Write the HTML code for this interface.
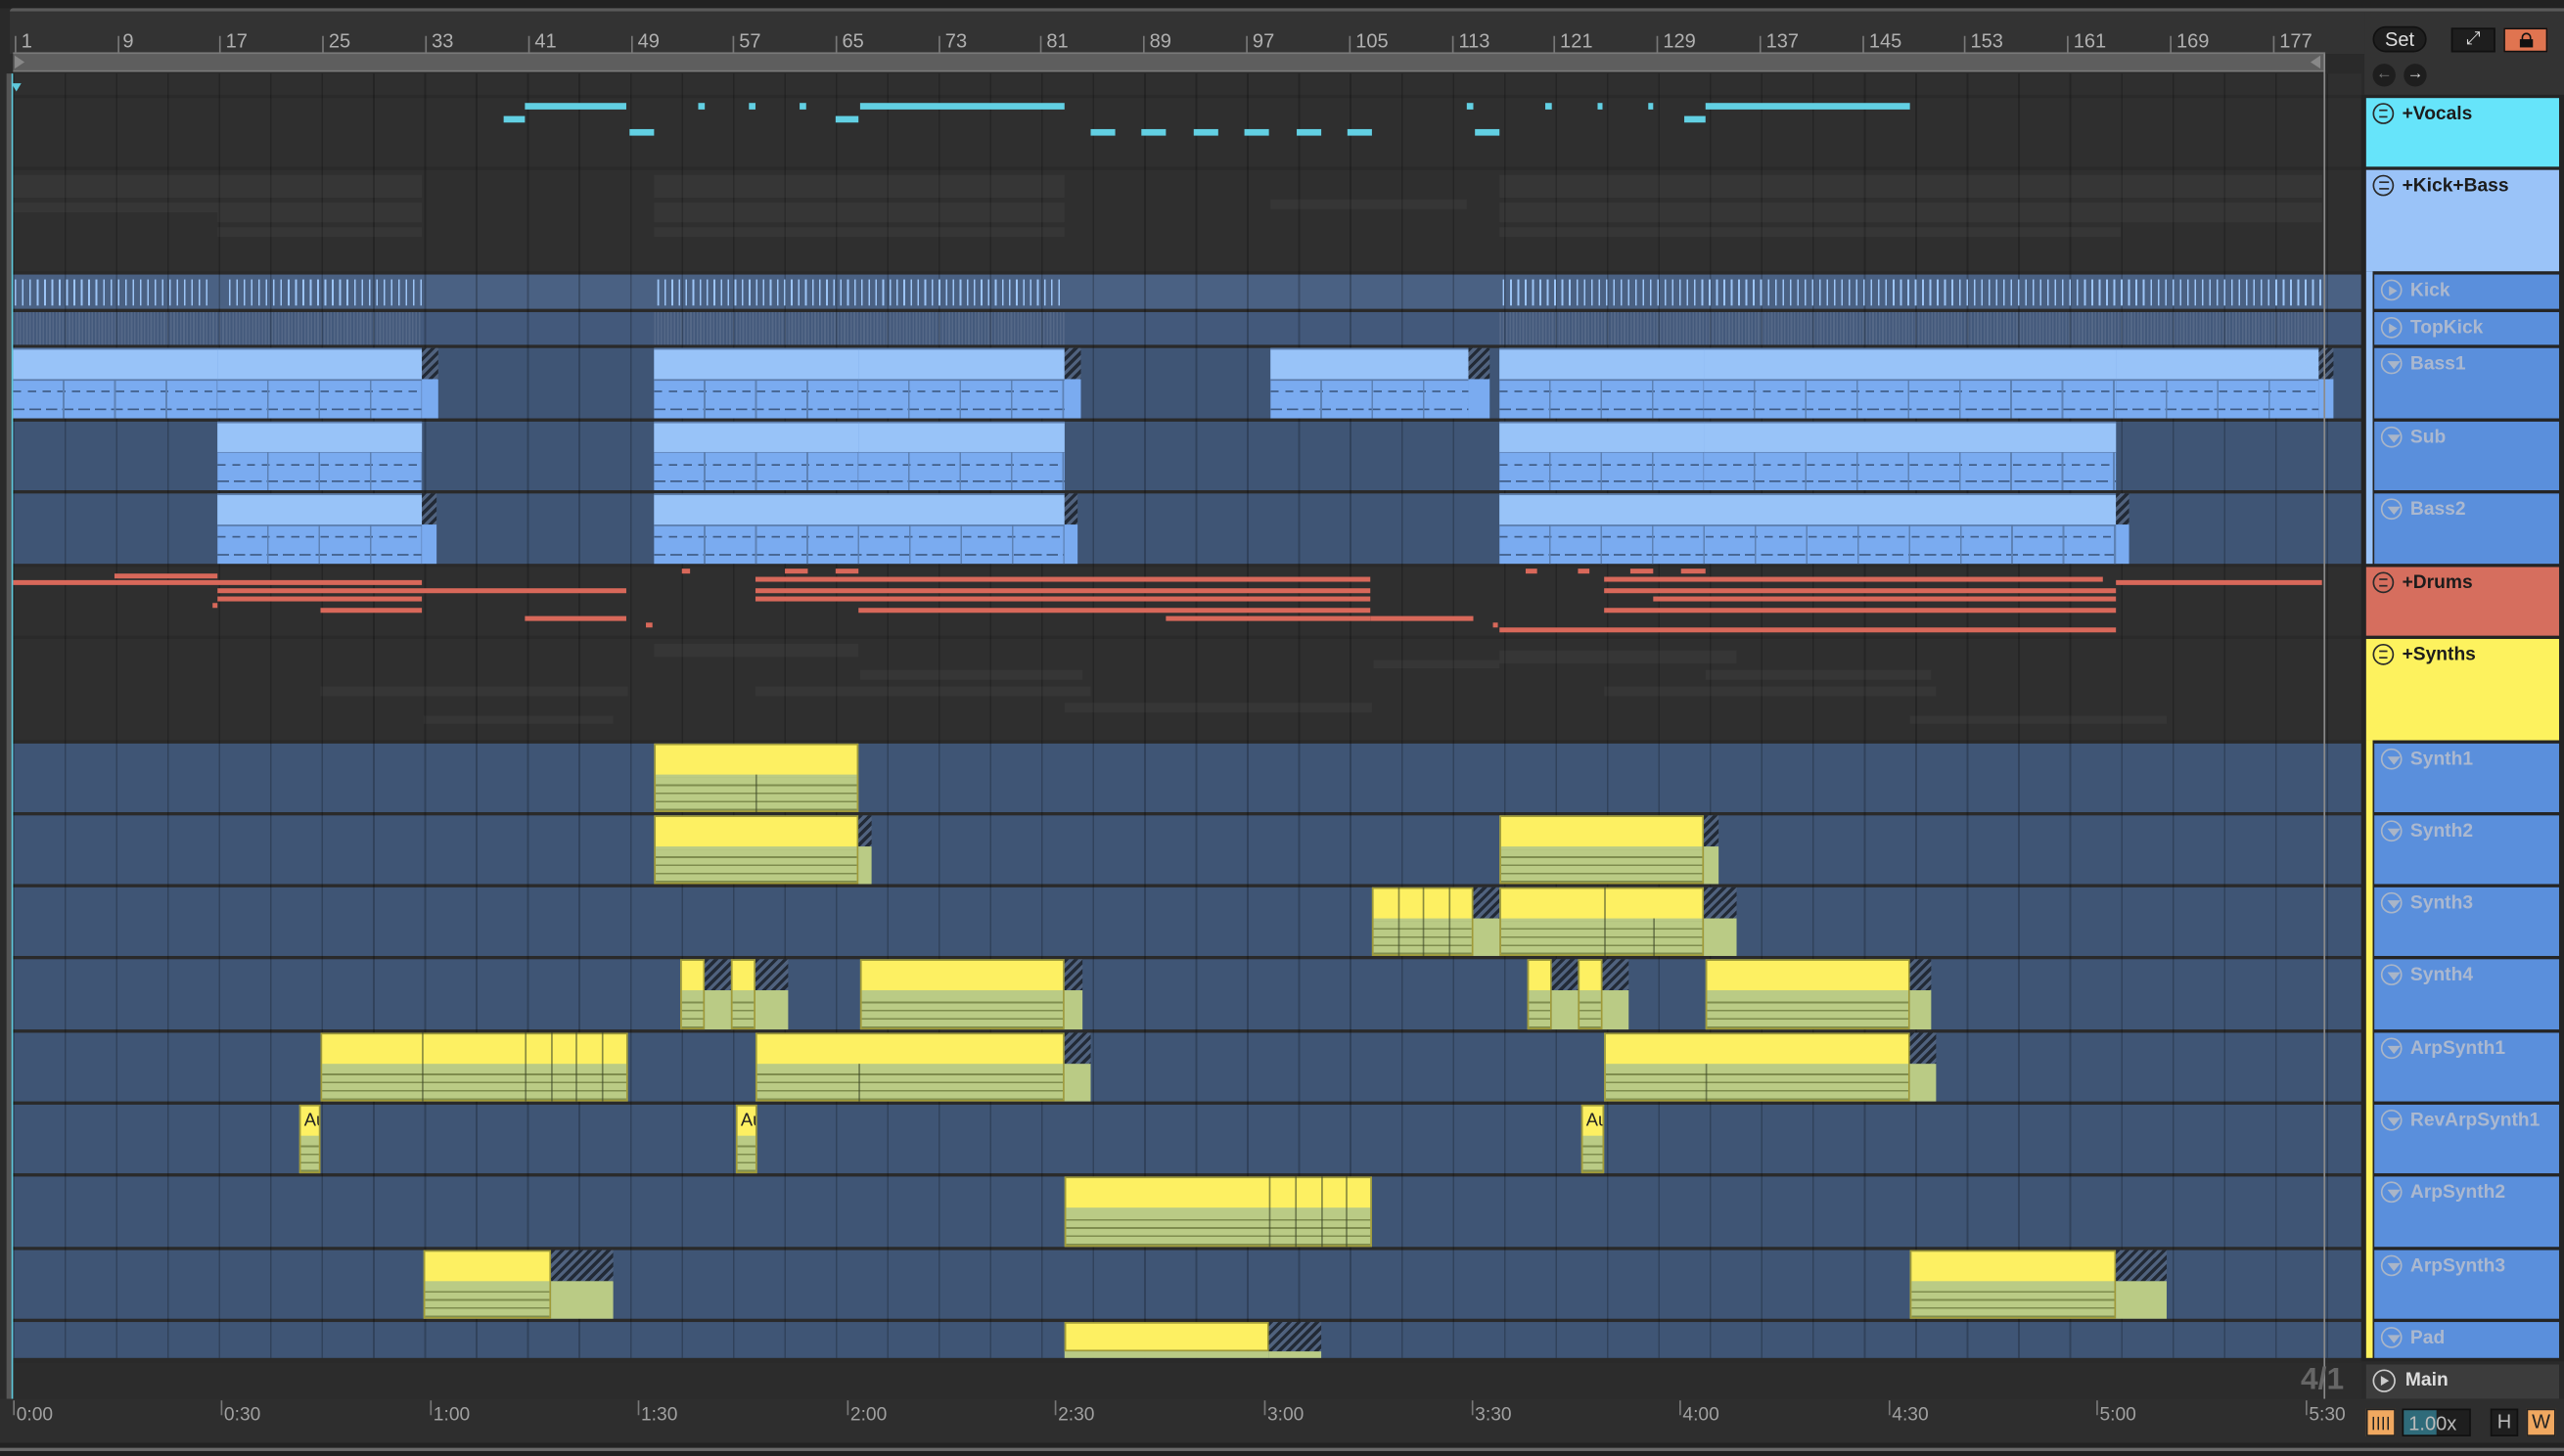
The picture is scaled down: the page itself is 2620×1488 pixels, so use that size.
<!DOCTYPE html>
<html><head><meta charset="utf-8"><style>
*{margin:0;padding:0;box-sizing:border-box}
html,body{width:2620px;height:1488px;overflow:hidden;background:#262626;font-family:"Liberation Sans",sans-serif}
#s{position:absolute;left:0;top:0;width:1568px;height:891px;transform:scale(1.67092,1.67003);transform-origin:0 0;background:#2a2a2a}
#s div{position:absolute}
.lg{background:#2f2f2f}
.lb{background:#3f5575}
.grid{background:repeating-linear-gradient(90deg,rgba(0,0,0,.22) 0 1px,transparent 1px 31.44px)}
.b{background:linear-gradient(#98c3f8,#98c3f8) 0 0/100% 43% no-repeat,linear-gradient(#5878a6,#5878a6) 0 43%/100% 1px no-repeat,repeating-linear-gradient(90deg,transparent 0 30.4px,#5d82b5 30.4px 31.4px),repeating-linear-gradient(90deg,#3f5c86 0 5px,transparent 5px 9px) 0 62%/100% 1px no-repeat,repeating-linear-gradient(90deg,#3f5c86 0 7px,transparent 7px 10px) 0 88%/100% 1px no-repeat,#7aabf0;border-top:1px solid #5e7fae}
.y{background:linear-gradient(#fdf062,#fdf062) 0 0/100% 45% no-repeat,repeating-linear-gradient(180deg,transparent 0 4px,#7f8d4e 4px 5px) 0 100%/100% 50% no-repeat,#bacb85;border:1px solid #a09a38}
.h{background:repeating-linear-gradient(135deg,#222a36 0 2px,#50627e 2px 4px)}
.v{width:1px;background:rgba(60,70,40,.6)}
.cy{background:#62d0e3;height:4px}
.r{background:#d8685a;height:3px}
.f{background:rgba(255,255,255,.035)}
.hd{font-weight:bold;font-size:11.5px;color:#1c1c1c;padding:4px 0 0 22px}
.st{background:#5a8fdc;font-weight:bold;font-size:11.5px;color:#abb8cf;padding:4px 0 0 22px;left:1452px;width:113px}
.ic{left:4px;top:3px;width:13px;height:13px;border-radius:50%;border:1.3px solid #2a2a2a}
.st .ic{border-color:#a9b5c8}
.tri{left:3px;top:4px;border-left:4px solid transparent;border-right:4px solid transparent;border-top:5px solid #a9b5c8}
.pl{left:4px;top:2.5px;border-top:3.5px solid transparent;border-bottom:3.5px solid transparent;border-left:5px solid #a9b5c8}
.rl{color:#b0b0b0;font-size:12px;top:18px}
.tk{width:1px;background:#777;top:22px;height:11px}
.tl{color:#a0a0a0;font-size:11.5px;top:860px}
.tt{width:1px;background:#777;top:857px;height:9px}
</style></head><body><div id="s">
<div style="left:0;top:0;width:1568px;height:5px;background:#222"></div>
<div style="left:6px;top:5px;width:1562px;height:2px;background:#5a5a5a;border-radius:3px 0 0 0"></div>
<div style="left:6px;top:7px;width:1440px;height:26px;background:#333"></div>
<div style="left:1446px;top:7px;width:122px;height:51px;background:#333"></div>
<div style="left:4px;top:45px;width:3px;height:812px;background:#555"></div>
<!-- ruler -->
<div class="tk" style="left:9px"></div><div class="rl" style="left:13px">1</div>
<div class="tk" style="left:72px"></div><div class="rl" style="left:75px">9</div>
<div class="tk" style="left:134px"></div><div class="rl" style="left:138px">17</div>
<div class="tk" style="left:197px"></div><div class="rl" style="left:201px">25</div>
<div class="tk" style="left:260px"></div><div class="rl" style="left:264px">33</div>
<div class="tk" style="left:323px"></div><div class="rl" style="left:327px">41</div>
<div class="tk" style="left:386px"></div><div class="rl" style="left:390px">49</div>
<div class="tk" style="left:448px"></div><div class="rl" style="left:452px">57</div>
<div class="tk" style="left:511px"></div><div class="rl" style="left:515px">65</div>
<div class="tk" style="left:574px"></div><div class="rl" style="left:578px">73</div>
<div class="tk" style="left:636px"></div><div class="rl" style="left:640px">81</div>
<div class="tk" style="left:699px"></div><div class="rl" style="left:703px">89</div>
<div class="tk" style="left:762px"></div><div class="rl" style="left:766px">97</div>
<div class="tk" style="left:825px"></div><div class="rl" style="left:829px">105</div>
<div class="tk" style="left:888px"></div><div class="rl" style="left:892px">113</div>
<div class="tk" style="left:950px"></div><div class="rl" style="left:954px">121</div>
<div class="tk" style="left:1013px"></div><div class="rl" style="left:1017px">129</div>
<div class="tk" style="left:1076px"></div><div class="rl" style="left:1080px">137</div>
<div class="tk" style="left:1139px"></div><div class="rl" style="left:1143px">145</div>
<div class="tk" style="left:1201px"></div><div class="rl" style="left:1205px">153</div>
<div class="tk" style="left:1264px"></div><div class="rl" style="left:1268px">161</div>
<div class="tk" style="left:1327px"></div><div class="rl" style="left:1331px">169</div>
<div class="tk" style="left:1390px"></div><div class="rl" style="left:1394px">177</div>
<!-- loop bar -->
<div style="left:8px;top:32px;width:1414px;height:12px;background:#5e5e5e;border-top:1.5px solid #7a7a7a;border-bottom:1.5px solid #7a7a7a"></div>
<div style="left:9px;top:34px;border-top:4px solid transparent;border-bottom:4px solid transparent;border-left:6px solid #888"></div>
<div style="left:1413px;top:34px;border-top:4px solid transparent;border-bottom:4px solid transparent;border-right:6px solid #888"></div>
<!-- lanes -->
<div class="lg" style="left:8px;top:45px;width:1436px;height:13px"></div>
<div class="lg" style="left:8px;top:60px;width:1436px;height:42px"></div>
<div class="lg" style="left:8px;top:104px;width:1436px;height:62px"></div>
<div style="left:8px;top:168px;width:1436px;height:21px;background:#4a6183"></div>
<div style="left:8px;top:191px;width:1436px;height:20px;background:#43597b"></div>
<div class="lb" style="left:8px;top:213px;width:1436px;height:43px"></div>
<div class="lb" style="left:8px;top:258px;width:1436px;height:42px"></div>
<div class="lb" style="left:8px;top:302px;width:1436px;height:43px"></div>
<div class="lg" style="left:8px;top:347px;width:1436px;height:42px"></div>
<div class="lg" style="left:8px;top:391px;width:1436px;height:62px"></div>
<div class="lb" style="left:8px;top:455px;width:1436px;height:42px"></div>
<div class="lb" style="left:8px;top:499px;width:1436px;height:42px"></div>
<div class="lb" style="left:8px;top:543px;width:1436px;height:42px"></div>
<div class="lb" style="left:8px;top:587px;width:1436px;height:43px"></div>
<div class="lb" style="left:8px;top:632px;width:1436px;height:42px"></div>
<div class="lb" style="left:8px;top:676px;width:1436px;height:42px"></div>
<div class="lb" style="left:8px;top:720px;width:1436px;height:43px"></div>
<div class="lb" style="left:8px;top:765px;width:1436px;height:42px"></div>
<div class="lb" style="left:8px;top:809px;width:1436px;height:22px"></div>
<div class="lg" style="left:8px;top:834px;width:1436px;height:22px;background:#2c2c2c"></div>
<div class="grid" style="left:8px;top:45px;width:1436px;height:786px"></div>
<!-- KB overview -->
<div class="f" style="left:8px;top:107px;width:250px;height:14px"></div>
<div class="f" style="left:400px;top:107px;width:251px;height:14px"></div>
<div class="f" style="left:917px;top:107px;width:503px;height:14px"></div>
<div class="f" style="left:8px;top:124px;width:125px;height:6px"></div>
<div class="f" style="left:133px;top:124px;width:125px;height:12px"></div>
<div class="f" style="left:400px;top:124px;width:251px;height:12px"></div>
<div class="f" style="left:917px;top:124px;width:503px;height:12px"></div>
<div class="f" style="left:133px;top:139px;width:125px;height:6px"></div>
<div class="f" style="left:400px;top:139px;width:251px;height:6px"></div>
<div class="f" style="left:777px;top:122px;width:120px;height:6px"></div>
<div class="f" style="left:917px;top:139px;width:380px;height:6px"></div>
<!-- synths overview -->
<div class="f" style="left:400px;top:394px;width:125px;height:8px"></div>
<div class="f" style="left:917px;top:398px;width:145px;height:8px"></div>
<div class="f" style="left:840px;top:404px;width:77px;height:5px"></div>
<div class="f" style="left:526px;top:410px;width:136px;height:6px"></div>
<div class="f" style="left:1043px;top:410px;width:138px;height:6px"></div>
<div class="f" style="left:196px;top:420px;width:188px;height:6px"></div>
<div class="f" style="left:462px;top:420px;width:205px;height:6px"></div>
<div class="f" style="left:981px;top:420px;width:203px;height:6px"></div>
<div class="f" style="left:651px;top:430px;width:188px;height:6px"></div>
<div class="f" style="left:259px;top:438px;width:116px;height:5px"></div>
<div class="f" style="left:1168px;top:438px;width:157px;height:5px"></div>
<!-- vocals -->
<div class="cy" style="left:321px;top:63px;width:62px"></div>
<div class="cy" style="left:427px;top:63px;width:4px"></div>
<div class="cy" style="left:458px;top:63px;width:4px"></div>
<div class="cy" style="left:489px;top:63px;width:4px"></div>
<div class="cy" style="left:526px;top:63px;width:125px"></div>
<div class="cy" style="left:897px;top:63px;width:4px"></div>
<div class="cy" style="left:945px;top:63px;width:4px"></div>
<div class="cy" style="left:977px;top:63px;width:3px"></div>
<div class="cy" style="left:1008px;top:63px;width:3px"></div>
<div class="cy" style="left:1043px;top:63px;width:125px"></div>
<div class="cy" style="left:308px;top:71px;width:13px"></div>
<div class="cy" style="left:511px;top:71px;width:14px"></div>
<div class="cy" style="left:1030px;top:71px;width:13px"></div>
<div class="cy" style="left:385px;top:79px;width:15px"></div>
<div class="cy" style="left:667px;top:79px;width:15px"></div>
<div class="cy" style="left:698px;top:79px;width:15px"></div>
<div class="cy" style="left:730px;top:79px;width:15px"></div>
<div class="cy" style="left:761px;top:79px;width:15px"></div>
<div class="cy" style="left:793px;top:79px;width:15px"></div>
<div class="cy" style="left:824px;top:79px;width:15px"></div>
<div class="cy" style="left:902px;top:79px;width:15px"></div>
<!-- kick -->
<div style="left:9px;top:171px;width:119px;height:16px;background:repeating-linear-gradient(90deg,#9cc4f5 0 1px,transparent 1px 4.5px)"></div>
<div style="left:140px;top:171px;width:118px;height:16px;background:repeating-linear-gradient(90deg,#9cc4f5 0 1px,transparent 1px 4.5px)"></div>
<div style="left:402px;top:171px;width:249px;height:16px;background:repeating-linear-gradient(90deg,#9cc4f5 0 1px,transparent 1px 4.3px)"></div>
<div style="left:919px;top:171px;width:501px;height:16px;background:repeating-linear-gradient(90deg,#9cc4f5 0 1px,transparent 1px 4.5px)"></div>
<div style="left:8px;top:191px;width:250px;height:20px;background:repeating-linear-gradient(90deg,rgba(255,255,255,.09) 0 1px,transparent 1px 2px)"></div>
<div style="left:400px;top:191px;width:251px;height:20px;background:repeating-linear-gradient(90deg,rgba(255,255,255,.09) 0 1px,transparent 1px 2px)"></div>
<div style="left:917px;top:191px;width:503px;height:20px;background:repeating-linear-gradient(90deg,rgba(255,255,255,.09) 0 1px,transparent 1px 2px)"></div>
<!-- bass1 -->
<div class="b" style="left:8px;top:213px;width:125px;height:43px"></div>
<div class="b" style="left:133px;top:213px;width:125px;height:43px"></div><div class="h" style="left:258px;top:213px;width:10px;height:19px"></div><div style="left:258px;top:232px;width:10px;height:24px;background:#7aabf0"></div>
<div class="b" style="left:400px;top:213px;width:125px;height:43px"></div>
<div class="b" style="left:525px;top:213px;width:126px;height:43px"></div><div class="h" style="left:651px;top:213px;width:10px;height:19px"></div><div style="left:651px;top:232px;width:10px;height:24px;background:#7aabf0"></div>
<div class="b" style="left:777px;top:213px;width:121px;height:43px"></div><div class="h" style="left:898px;top:213px;width:13px;height:19px"></div><div style="left:898px;top:232px;width:13px;height:24px;background:#7aabf0"></div>
<div class="b" style="left:917px;top:213px;width:125px;height:43px"></div>
<div class="b" style="left:1042px;top:213px;width:252px;height:43px"></div>
<div class="b" style="left:1294px;top:213px;width:124px;height:43px"></div><div class="h" style="left:1418px;top:213px;width:9px;height:19px"></div><div style="left:1418px;top:232px;width:9px;height:24px;background:#7aabf0"></div>
<!-- sub -->
<div class="b" style="left:133px;top:258px;width:125px;height:42px"></div>
<div class="b" style="left:400px;top:258px;width:125px;height:42px"></div>
<div class="b" style="left:525px;top:258px;width:126px;height:42px"></div>
<div class="b" style="left:917px;top:258px;width:125px;height:42px"></div>
<div class="b" style="left:1042px;top:258px;width:252px;height:42px"></div>
<!-- bass2 -->
<div class="b" style="left:133px;top:302px;width:125px;height:43px"></div><div class="h" style="left:258px;top:302px;width:9px;height:19px"></div><div style="left:258px;top:321px;width:9px;height:24px;background:#7aabf0"></div>
<div class="b" style="left:400px;top:302px;width:251px;height:43px"></div><div class="h" style="left:651px;top:302px;width:8px;height:19px"></div><div style="left:651px;top:321px;width:8px;height:24px;background:#7aabf0"></div>
<div class="b" style="left:917px;top:302px;width:377px;height:43px"></div><div class="h" style="left:1294px;top:302px;width:8px;height:19px"></div><div style="left:1294px;top:321px;width:8px;height:24px;background:#7aabf0"></div>
<!-- drums -->
<div class="r" style="left:70px;top:351px;width:63px"></div>
<div class="r" style="left:417px;top:348px;width:5px"></div>
<div class="r" style="left:480px;top:348px;width:14px"></div>
<div class="r" style="left:511px;top:348px;width:14px"></div>
<div class="r" style="left:933px;top:348px;width:7px"></div>
<div class="r" style="left:965px;top:348px;width:7px"></div>
<div class="r" style="left:997px;top:348px;width:14px"></div>
<div class="r" style="left:1028px;top:348px;width:15px"></div>
<div class="r" style="left:8px;top:355px;width:250px"></div>
<div class="r" style="left:462px;top:353px;width:376px"></div>
<div class="r" style="left:981px;top:353px;width:305px"></div>
<div class="r" style="left:1294px;top:355px;width:126px"></div>
<div class="r" style="left:133px;top:360px;width:250px"></div>
<div class="r" style="left:462px;top:360px;width:376px"></div>
<div class="r" style="left:981px;top:360px;width:313px"></div>
<div class="r" style="left:133px;top:365px;width:125px"></div>
<div class="r" style="left:462px;top:365px;width:376px"></div>
<div class="r" style="left:1011px;top:365px;width:283px"></div>
<div class="r" style="left:130px;top:369px;width:3px"></div>
<div class="r" style="left:196px;top:372px;width:62px"></div>
<div class="r" style="left:525px;top:372px;width:313px"></div>
<div class="r" style="left:981px;top:372px;width:313px"></div>
<div class="r" style="left:321px;top:377px;width:62px"></div>
<div class="r" style="left:713px;top:377px;width:125px"></div>
<div class="r" style="left:838px;top:377px;width:63px"></div>
<div class="r" style="left:395px;top:381px;width:4px"></div>
<div class="r" style="left:913px;top:381px;width:3px"></div>
<div class="r" style="left:917px;top:384px;width:377px"></div>
<!-- synth1 -->
<div class="y" style="left:400px;top:455px;width:125px;height:42px"></div><div class="v" style="left:462px;top:474px;height:23px"></div>
<!-- synth2 -->
<div class="y" style="left:400px;top:499px;width:125px;height:42px"></div><div class="h" style="left:525px;top:499px;width:8px;height:19px"></div><div style="left:525px;top:518px;width:8px;height:23px;background:#bacb85"></div>
<div class="y" style="left:917px;top:499px;width:125px;height:42px"></div><div class="h" style="left:1042px;top:499px;width:9px;height:19px"></div><div style="left:1042px;top:518px;width:9px;height:23px;background:#bacb85"></div>
<!-- synth3 -->
<div class="y" style="left:839px;top:543px;width:62px;height:42px"></div><div class="h" style="left:901px;top:543px;width:16px;height:19px"></div><div style="left:901px;top:562px;width:16px;height:23px;background:#bacb85"></div>
<div class="v" style="left:855px;top:543px;height:42px"></div><div class="v" style="left:870px;top:543px;height:42px"></div><div class="v" style="left:886px;top:543px;height:42px"></div>
<div class="y" style="left:917px;top:543px;width:125px;height:42px"></div><div class="h" style="left:1042px;top:543px;width:20px;height:19px"></div><div style="left:1042px;top:562px;width:20px;height:23px;background:#bacb85"></div>
<div class="v" style="left:981px;top:543px;height:42px"></div><div class="v" style="left:1011px;top:562px;height:23px"></div>
<!-- synth4 -->
<div class="y" style="left:416px;top:587px;width:15px;height:43px"></div><div class="h" style="left:431px;top:587px;width:16px;height:19px"></div><div style="left:431px;top:606px;width:16px;height:24px;background:#bacb85"></div>
<div class="y" style="left:447px;top:587px;width:15px;height:43px"></div><div class="h" style="left:462px;top:587px;width:20px;height:19px"></div><div style="left:462px;top:606px;width:20px;height:24px;background:#bacb85"></div>
<div class="y" style="left:526px;top:587px;width:125px;height:43px"></div><div class="h" style="left:651px;top:587px;width:11px;height:19px"></div><div style="left:651px;top:606px;width:11px;height:24px;background:#bacb85"></div>
<div class="y" style="left:934px;top:587px;width:15px;height:43px"></div><div class="h" style="left:949px;top:587px;width:16px;height:19px"></div><div style="left:949px;top:606px;width:16px;height:24px;background:#bacb85"></div>
<div class="y" style="left:965px;top:587px;width:15px;height:43px"></div><div class="h" style="left:980px;top:587px;width:16px;height:19px"></div><div style="left:980px;top:606px;width:16px;height:24px;background:#bacb85"></div>
<div class="y" style="left:1043px;top:587px;width:125px;height:43px"></div><div class="h" style="left:1168px;top:587px;width:13px;height:19px"></div><div style="left:1168px;top:606px;width:13px;height:24px;background:#bacb85"></div>
<!-- arp1 -->
<div class="y" style="left:196px;top:632px;width:188px;height:42px"></div>
<div class="v" style="left:258px;top:632px;height:42px"></div><div class="v" style="left:321px;top:632px;height:42px"></div><div class="v" style="left:337px;top:632px;height:42px"></div><div class="v" style="left:352px;top:632px;height:42px"></div><div class="v" style="left:368px;top:632px;height:42px"></div>
<div class="y" style="left:462px;top:632px;width:189px;height:42px"></div><div class="h" style="left:651px;top:632px;width:16px;height:19px"></div><div style="left:651px;top:651px;width:16px;height:23px;background:#bacb85"></div><div class="v" style="left:525px;top:651px;height:23px"></div>
<div class="y" style="left:981px;top:632px;width:187px;height:42px"></div><div class="h" style="left:1168px;top:632px;width:16px;height:19px"></div><div style="left:1168px;top:651px;width:16px;height:23px;background:#bacb85"></div><div class="v" style="left:1043px;top:651px;height:23px"></div>
<!-- revarp -->
<div class="y" style="left:183px;top:676px;width:13px;height:42px;overflow:hidden;font-size:11px;color:#222;padding:3px 0 0 2px">Au</div>
<div class="y" style="left:450px;top:676px;width:13px;height:42px;overflow:hidden;font-size:11px;color:#222;padding:3px 0 0 2px">Au</div>
<div class="y" style="left:967px;top:676px;width:14px;height:42px;overflow:hidden;font-size:11px;color:#222;padding:3px 0 0 2px">Au</div>
<!-- arp2 -->
<div class="y" style="left:651px;top:720px;width:188px;height:43px"></div>
<div class="v" style="left:776px;top:720px;height:43px"></div><div class="v" style="left:792px;top:720px;height:43px"></div><div class="v" style="left:808px;top:720px;height:43px"></div><div class="v" style="left:823px;top:720px;height:43px"></div>
<!-- arp3 -->
<div class="y" style="left:259px;top:765px;width:78px;height:42px"></div><div class="h" style="left:337px;top:765px;width:38px;height:19px"></div><div style="left:337px;top:784px;width:38px;height:23px;background:#bacb85"></div>
<div class="y" style="left:1168px;top:765px;width:126px;height:42px"></div><div class="h" style="left:1294px;top:765px;width:31px;height:19px"></div><div style="left:1294px;top:784px;width:31px;height:23px;background:#bacb85"></div>
<!-- pad -->
<div style="left:651px;top:809px;width:125px;height:18px;background:#fdf062;border:1px solid #a09a38"></div><div style="left:651px;top:827px;width:125px;height:4px;background:#bacb85"></div>
<div class="h" style="left:776px;top:809px;width:32px;height:18px"></div><div style="left:776px;top:827px;width:32px;height:4px;background:#bacb85"></div>
<!-- playhead / end marker -->
<div style="left:7px;top:45px;width:1px;height:812px;background:#5fc9dc"></div>
<div style="left:7px;top:51px;border-left:3px solid transparent;border-right:3px solid transparent;border-top:5px solid #5fc9dc"></div>
<div style="left:1421px;top:33px;width:1px;height:825px;background:#8a8a8a"></div>
<!-- right headers -->
<div style="left:1444px;top:58px;width:124px;height:775px;background:#242424"></div>
<div style="left:1447px;top:60px;width:118px;height:42px;background:#66e4fa" class="hd">+Vocals<div class="ic"><div style="left:3px;top:3px;width:5px;height:5px;border-top:1.2px solid #2a2a2a;border-bottom:1.2px solid #2a2a2a"></div></div></div>
<div style="left:1447px;top:104px;width:118px;height:62px;background:#9ac3f8" class="hd">+Kick+Bass<div class="ic"><div style="left:3px;top:3px;width:6px;height:5px;border-top:1.2px solid #2a2a2a;border-bottom:1.2px solid #2a2a2a"></div></div></div>
<div style="left:1447px;top:166px;width:4px;height:179px;background:#9ac3f8"></div>
<div class="st" style="top:168px;height:21px">Kick<div class="ic"><div class="pl"></div></div></div>
<div class="st" style="top:191px;height:20px">TopKick<div class="ic"><div class="pl"></div></div></div>
<div class="st" style="top:213px;height:43px">Bass1<div class="ic"><div class="tri"></div></div></div>
<div class="st" style="top:258px;height:42px">Sub<div class="ic"><div class="tri"></div></div></div>
<div class="st" style="top:302px;height:43px">Bass2<div class="ic"><div class="tri"></div></div></div>
<div style="left:1447px;top:347px;width:118px;height:42px;background:#d66e5e" class="hd">+Drums<div class="ic"><div style="left:3px;top:3px;width:5px;height:5px;border-top:1.2px solid #2a2a2a;border-bottom:1.2px solid #2a2a2a"></div></div></div>
<div style="left:1447px;top:391px;width:118px;height:62px;background:#fdf25e" class="hd">+Synths<div class="ic"><div style="left:3px;top:3px;width:5px;height:5px;border-top:1.2px solid #2a2a2a;border-bottom:1.2px solid #2a2a2a"></div></div></div>
<div style="left:1447px;top:453px;width:4px;height:378px;background:#fdf25e"></div>
<div class="st" style="top:455px;height:42px">Synth1<div class="ic"><div class="tri"></div></div></div>
<div class="st" style="top:499px;height:42px">Synth2<div class="ic"><div class="tri"></div></div></div>
<div class="st" style="top:543px;height:42px">Synth3<div class="ic"><div class="tri"></div></div></div>
<div class="st" style="top:587px;height:43px">Synth4<div class="ic"><div class="tri"></div></div></div>
<div class="st" style="top:632px;height:42px">ArpSynth1<div class="ic"><div class="tri"></div></div></div>
<div class="st" style="top:676px;height:42px">RevArpSynth1<div class="ic"><div class="tri"></div></div></div>
<div class="st" style="top:720px;height:43px">ArpSynth2<div class="ic"><div class="tri"></div></div></div>
<div class="st" style="top:765px;height:42px">ArpSynth3<div class="ic"><div class="tri"></div></div></div>
<div class="st" style="top:809px;height:22px">Pad<div class="ic"><div class="tri"></div></div></div>
<!-- main -->
<div style="left:1447px;top:835px;width:118px;height:21px;background:#3c3c3c;color:#ddd;font-weight:bold;font-size:11.5px;padding:4px 0 0 24px">Main<div style="left:4px;top:3px;width:14px;height:14px;border-radius:50%;border:1.3px solid #ccc"><div style="left:4px;top:2.5px;border-top:3.5px solid transparent;border-bottom:3.5px solid transparent;border-left:5px solid #ccc"></div></div></div>
<div style="left:1407px;top:834px;color:#666;font-weight:bold;font-size:19px">4/1</div>
<!-- time ruler -->
<div style="left:0;top:856px;width:1568px;height:27px;background:#2e2e2e"></div>
<div class="tt" style="left:8px"></div><div class="tl" style="left:10px">0:00</div>
<div class="tt" style="left:135px"></div><div class="tl" style="left:137px">0:30</div>
<div class="tt" style="left:263px"></div><div class="tl" style="left:265px">1:00</div>
<div class="tt" style="left:390px"></div><div class="tl" style="left:392px">1:30</div>
<div class="tt" style="left:518px"></div><div class="tl" style="left:520px">2:00</div>
<div class="tt" style="left:645px"></div><div class="tl" style="left:647px">2:30</div>
<div class="tt" style="left:773px"></div><div class="tl" style="left:775px">3:00</div>
<div class="tt" style="left:900px"></div><div class="tl" style="left:902px">3:30</div>
<div class="tt" style="left:1027px"></div><div class="tl" style="left:1029px">4:00</div>
<div class="tt" style="left:1155px"></div><div class="tl" style="left:1157px">4:30</div>
<div class="tt" style="left:1282px"></div><div class="tl" style="left:1284px">5:00</div>
<div class="tt" style="left:1410px"></div><div class="tl" style="left:1412px">5:30</div>
<div style="left:1447px;top:862px;width:18px;height:17px;background:#f0a860;border:1px solid #222"><div style="left:3px;top:4px;width:10px;height:8px;background:repeating-linear-gradient(90deg,#222 0 1px,transparent 1px 3px)"></div></div>
<div style="left:1469px;top:862px;width:42px;height:17px;background:#1e1e1e;border:1px solid #111;color:#bbb;font-size:12px;padding:1px 0 0 3px"><div style="left:0;top:0;width:20px;height:15px;background:#2f6b7a"></div><span style="position:relative">1.00x</span></div>
<div style="left:1523px;top:862px;width:17px;height:17px;background:#1e1e1e;border:1px solid #111;color:#bbb;font-size:12px;text-align:center;line-height:15px">H</div>
<div style="left:1545px;top:862px;width:18px;height:17px;background:#f0a860;border:1px solid #222;color:#222;font-size:12px;text-align:center;line-height:15px">W</div>
<div style="left:0;top:883px;width:1568px;height:8px;background:#222"></div>
<div style="left:0;top:886px;width:1568px;height:2px;background:#6a6a6a"></div>
<!-- top right buttons -->
<div style="left:1451px;top:16px;width:33px;height:16px;border-radius:8px;background:#1e1e1e;border:1px solid #111;color:#ddd;font-size:12px;text-align:center;line-height:14px">Set</div>
<div style="left:1499px;top:17px;width:27px;height:15px;background:#1e1e1e;border:1px solid #111;color:#ddd;font-size:11px;text-align:center;line-height:13px">⤢</div>
<div style="left:1531px;top:17px;width:27px;height:15px;background:#e07450;border:1px solid #111"><div style="left:9px;top:6px;width:8px;height:5px;background:#111"></div><div style="left:10px;top:2px;width:6px;height:6px;border:1.5px solid #111;border-bottom:none;border-radius:3px 3px 0 0"></div></div>
<div style="left:1451px;top:39px;width:14px;height:14px;border-radius:50%;background:#1e1e1e;color:#777;font-size:10px;text-align:center;line-height:14px">←</div>
<div style="left:1470px;top:39px;width:14px;height:14px;border-radius:50%;background:#1e1e1e;color:#ddd;font-size:10px;text-align:center;line-height:14px">→</div>
</div></body></html>
